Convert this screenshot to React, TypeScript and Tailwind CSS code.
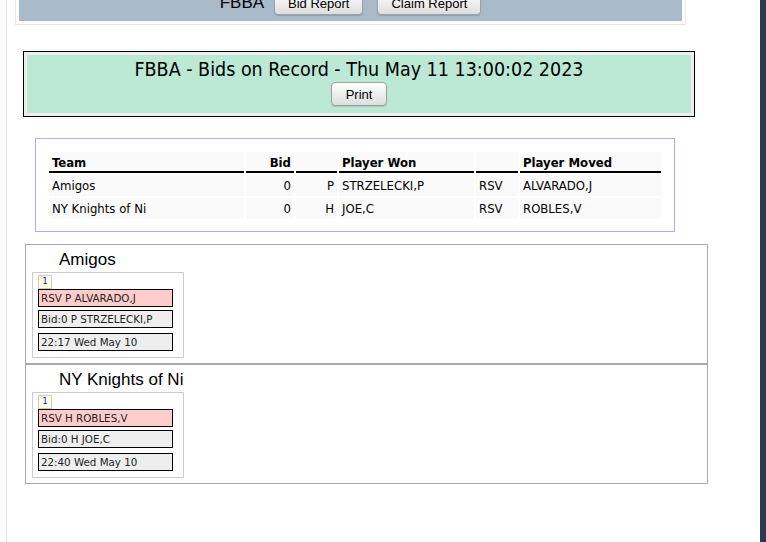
import React from "react";

interface Bid {
  team: string;
  bid: number;
  pos: string;
  won: string;
  status: string;
  moved: string;
  time: string;
}

const bids: Bid[] = [
  {
    team: "Amigos",
    bid: 0,
    pos: "P",
    won: "STRZELECKI,P",
    status: "RSV",
    moved: "ALVARADO,J",
    time: "22:17 Wed May 10",
  },
  {
    team: "NY Knights of Ni",
    bid: 0,
    pos: "H",
    won: "JOE,C",
    status: "RSV",
    moved: "ROBLES,V",
    time: "22:40 Wed May 10",
  },
];

const btn =
  "h-[24px] rounded-[4px] border border-[#a0a0a0] bg-linear-to-b from-white to-[#dedede] px-[13px] text-[13px] leading-none text-black shadow-[0_1px_1px_rgba(0,0,0,0.15)] font-['Liberation_Sans',Arial,sans-serif]";

const tahoma = "font-['DejaVu_Sans_Condensed','Liberation_Sans',sans-serif]";

function TeamBids({ item }: { item: Bid }) {
  return (
    <div className="h-[120px] border border-[#aaaaaa] pt-[5px]">
      <h2 className="pl-[33px] text-[17px] leading-[20px] text-black font-['Liberation_Sans',Arial,sans-serif]">
        {item.team}
      </h2>
      <div className="ml-[6px] mt-[2px] h-[86px] w-[152px] border border-[#cccccc] pl-[5px] pt-[2px] font-['DejaVu_Sans',Verdana,sans-serif] text-[10.3px] text-[#222]">
        <div className="flex h-[14px] w-[14px] items-center justify-center border border-[#cccccc] bg-[#ffffe0] text-[8px] leading-none text-[#0000ff]">
          1
        </div>
        <div className="h-[18px] w-[135px] border border-black bg-[#ffcccc] pl-[2px] leading-[16px]">
          {item.status} {item.pos} {item.moved}
        </div>
        <div className="mt-[3px] h-[18px] w-[135px] border border-black bg-[#eeeeee] pl-[2px] leading-[16px]">
          Bid:{item.bid} {item.pos} {item.won}
        </div>
        <div className="mt-[5px] h-[18px] w-[135px] border border-black bg-[#eeeeee] pl-[2px] leading-[16px]">
          {item.time}
        </div>
      </div>
    </div>
  );
}

export default function App() {
  return (
    <div className="flex min-h-screen overflow-hidden bg-white">
      <div className="flex-1">
        <div className="ml-[6px] flex min-h-screen flex-col items-start border-l border-[#e5e5e5]">
          {/* top menu, scrolled half out of view */}
          <div className="ml-[8px] mt-[-19px] w-[671px] border border-[#e6e6e6] p-[3px]">
            <div className="flex h-[36px] items-center justify-center bg-[#a9bacb]">
              <span className="mr-[10px] text-[17px] text-black font-['Liberation_Sans',Arial,sans-serif]">
                FBBA
              </span>
              <button className={btn}>Bid Report</button>
              <button className={`${btn} ml-[14px]`}>Claim Report</button>
            </div>
          </div>

          {/* title */}
          <div className="ml-[16px] mt-[26px] w-[672px] border border-black bg-[#eeeeee] p-[3px]">
            <div className="flex flex-col items-center bg-[#bbe9d6] pb-[7px] pt-[3px]">
              <h1 className={`text-[19.5px] leading-[23px] text-black ${tahoma}`}>
                FBBA - Bids on Record - Thu May 11 13:00:02 2023
              </h1>
              <button className={`${btn} mt-[1px] h-[22px] px-[14px] text-[12px]`}>Print</button>
            </div>
          </div>

          {/* summary table */}
          <div className="ml-[28px] mt-[21px] w-[640px] border border-[#aaaaff] px-[11px] pb-[10px] pt-[11px]">
            <table className={`w-full table-fixed border-separate border-spacing-[2px] text-[13px] text-black ${tahoma}`}>
              <thead>
                <tr className="bg-[#fafafa]">
                  <th className="w-[195px] border-b-2 border-black px-[3px] pb-0 pt-[2px] text-left leading-[17px]">
                    Team
                  </th>
                  <th className="w-[48px] border-b-2 border-black px-[3px] pb-0 pt-[2px] text-right leading-[17px]">
                    Bid
                  </th>
                  <th className="w-[41px] border-b-2 border-black px-[3px] pb-0 pt-[2px] leading-[17px]"></th>
                  <th className="w-[135px] border-b-2 border-black px-[3px] pb-0 pt-[2px] text-left leading-[17px]">
                    Player Won
                  </th>
                  <th className="w-[42px] border-b-2 border-black px-[3px] pb-0 pt-[2px] leading-[17px]"></th>
                  <th className="border-b-2 border-black px-[3px] pb-0 pt-[2px] text-left leading-[17px]">
                    Player Moved
                  </th>
                </tr>
              </thead>
              <tbody>
                {bids.map((b) => (
                  <tr key={b.team} className="bg-[#fafafa]">
                    <td className="px-[3px] py-[2px] leading-[17px]">{b.team}</td>
                    <td className="px-[3px] py-[2px] text-right leading-[17px]">{b.bid}</td>
                    <td className="px-[3px] py-[2px] text-right leading-[17px]">{b.pos}</td>
                    <td className="px-[3px] py-[2px] leading-[17px]">{b.won}</td>
                    <td className="px-[3px] py-[2px] leading-[17px]">{b.status}</td>
                    <td className="px-[3px] py-[2px] leading-[17px]">{b.moved}</td>
                  </tr>
                ))}
              </tbody>
            </table>
          </div>

          {/* per team detail */}
          <div className="ml-[18px] mt-[12px] w-[683px]">
            {bids.map((b) => (
              <TeamBids key={b.team} item={b} />
            ))}
          </div>
        </div>
      </div>
      <div className="w-[6px] bg-[#2b3a4d]" />
    </div>
  );
}
